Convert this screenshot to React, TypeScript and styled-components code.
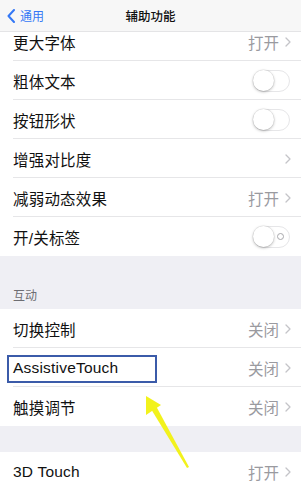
import React from "react";
import styled, { createGlobalStyle } from "styled-components";

const Global = createGlobalStyle`
  html, body { margin: 0; padding: 0; }
  body {
    width: 301px;
    height: 490px;
    overflow: hidden;
    background: #efeff4;
    font-family: "Liberation Sans", "Noto Sans CJK SC", sans-serif;
    -webkit-font-smoothing: antialiased;
  }
`;

const Screen = styled.div`
  position: relative;
  width: 301px;
  height: 490px;
  overflow: hidden;
  background: #efeff4;
`;

const NavBar = styled.div`
  position: relative;
  z-index: 2;
  height: 32px;
  background: #f7f7f7;
  border-bottom: 1px solid #e4e4e6;
  box-sizing: border-box;
  display: flex;
  align-items: center;
  justify-content: center;
`;

const Back = styled.div`
  position: absolute;
  left: 7px;
  top: 0;
  height: 31px;
  display: flex;
  align-items: center;
  gap: 5px;
  color: #3478f6;
  font-size: 12px;
`;

const Title = styled.div`
  font-size: 12.5px;
  color: #111;
  font-weight: 500;
`;

const Content = styled.div`
  margin-top: -10px;
  display: flex;
  flex-direction: column;
`;

const Group = styled.div`
  background: #fff;
  display: flex;
  flex-direction: column;
`;

const Row = styled.div<{ $last?: boolean }>`
  position: relative;
  height: 39px;
  display: flex;
  align-items: center;
  padding: 0 10px 0 13px;
  box-sizing: border-box;
  &::after {
    content: "";
    display: ${(p) => (p.$last ? "none" : "block")};
    position: absolute;
    left: 13px;
    right: 0;
    bottom: 0;
    height: 1px;
    background: #e6e6e8;
  }
`;

const Label = styled.div`
  flex: 1;
  font-size: 15.5px;
  color: #111;
  letter-spacing: 0.2px;
`;

const Value = styled.div`
  font-size: 15.5px;
  color: #9a9a9f;
  margin-right: 6px;
`;

const Chevron = () => (
  <svg width="6" height="10" viewBox="0 0 6 10">
    <path d="M1 1 L5 5 L1 9" fill="none" stroke="#c4c4c8" strokeWidth="1.3" strokeLinecap="round" strokeLinejoin="round" />
  </svg>
);

const SwitchTrack = styled.div`
  position: relative;
  width: 37px;
  height: 22px;
  border-radius: 11px;
  border: 1.5px solid #e6e6e8;
  box-sizing: border-box;
  background: #fff;
  margin-right: 1px;
`;

const Knob = styled.div`
  position: absolute;
  left: -1px;
  top: -1px;
  width: 21px;
  height: 21px;
  border-radius: 50%;
  background: #fff;
  box-shadow: 0 1px 3px rgba(0, 0, 0, 0.28), 0 0 0 0.5px rgba(0, 0, 0, 0.08);
`;

const OffMark = styled.div`
  position: absolute;
  right: 5px;
  top: 6px;
  width: 5px;
  height: 5px;
  border-radius: 50%;
  border: 1.2px solid #a8a8ac;
`;

const Switch = ({ mark }: { mark?: boolean }) => (
  <SwitchTrack>
    <Knob />
    {mark && <OffMark />}
  </SwitchTrack>
);

const Gap = styled.div<{ $h: number }>`
  height: ${(p) => p.$h}px;
  display: flex;
  align-items: flex-end;
  padding: 0 13px 6px;
  box-sizing: border-box;
`;

const SectionTitle = styled.div`
  font-size: 12px;
  color: #6d6d72;
`;

const Highlight = styled.div`
  position: absolute;
  left: 7px;
  top: 355px;
  width: 150px;
  height: 28px;
  border: 2px solid #3b5ba9;
  box-sizing: border-box;
  pointer-events: none;
`;

const ArrowSvg = styled.svg`
  position: absolute;
  left: 0;
  top: 0;
  pointer-events: none;
`;

type Item = { label: string; value?: string; chevron?: boolean; sw?: boolean; mark?: boolean };

const group1: Item[] = [
  { label: "更大字体", value: "打开", chevron: true },
  { label: "粗体文本", sw: true },
  { label: "按钮形状", sw: true },
  { label: "增强对比度", chevron: true },
  { label: "减弱动态效果", value: "打开", chevron: true },
  { label: "开/关标签", sw: true, mark: true },
];

const group2: Item[] = [
  { label: "切换控制", value: "关闭", chevron: true },
  { label: "AssistiveTouch", value: "关闭", chevron: true },
  { label: "触摸调节", value: "关闭", chevron: true },
];

const group3: Item[] = [{ label: "3D Touch", value: "打开", chevron: true }];

const renderGroup = (items: Item[]) => (
  <Group>
    {items.map((it, i) => (
      <Row key={it.label} $last={i === items.length - 1}>
        <Label>{it.label}</Label>
        {it.value && <Value>{it.value}</Value>}
        {it.chevron && <Chevron />}
        {it.sw && <Switch mark={it.mark} />}
      </Row>
    ))}
  </Group>
);

export default function App() {
  return (
    <Screen>
      <Global />
      <NavBar>
        <Back>
          <svg width="8" height="14" viewBox="0 0 8 14">
            <path d="M7 1 L1.5 7 L7 13" fill="none" stroke="#3478f6" strokeWidth="2" strokeLinecap="round" strokeLinejoin="round" />
          </svg>
          <span>通用</span>
        </Back>
        <Title>辅助功能</Title>
      </NavBar>
      <Content>
        {renderGroup(group1)}
        <Gap $h={53}>
          <SectionTitle>互动</SectionTitle>
        </Gap>
        {renderGroup(group2)}
        <Gap $h={26} />
        {renderGroup(group3)}
      </Content>
      <Highlight />
      <ArrowSvg width="301" height="490" viewBox="0 0 301 490">
        <polygon points="146,396 146,415 161,405" fill="#f2f21c" />
        <polygon points="151,409 156,406 189,467 187,468" fill="#f2f21c" />
      </ArrowSvg>
    </Screen>
  );
}
